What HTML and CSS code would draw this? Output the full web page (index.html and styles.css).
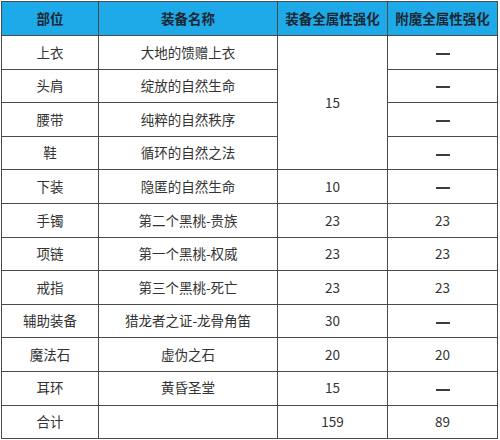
FILE: index.html
```html
<!DOCTYPE html>
<html lang="zh">
<head>
<meta charset="utf-8">
<link rel="stylesheet" href="styles.css">
</head>
<body>
<table class="gear">
  <colgroup>
    <col class="c1"><col class="c2"><col class="c3"><col class="c4">
  </colgroup>
  <thead>
    <tr><th>部位</th><th>装备名称</th><th>装备全属性强化</th><th>附魔全属性强化</th></tr>
  </thead>
  <tbody>
    <tr><td>上衣</td><td>大地的馈赠上衣</td><td rowspan="4">15</td><td><span class="dash"></span></td></tr>
    <tr><td>头肩</td><td>绽放的自然生命</td><td><span class="dash"></span></td></tr>
    <tr><td>腰带</td><td>纯粹的自然秩序</td><td><span class="dash"></span></td></tr>
    <tr><td>鞋</td><td>循环的自然之法</td><td><span class="dash"></span></td></tr>
    <tr><td>下装</td><td>隐匿的自然生命</td><td>10</td><td><span class="dash"></span></td></tr>
    <tr><td>手镯</td><td>第二个黑桃-贵族</td><td>23</td><td>23</td></tr>
    <tr><td>项链</td><td>第一个黑桃-权威</td><td>23</td><td>23</td></tr>
    <tr><td>戒指</td><td>第三个黑桃-死亡</td><td>23</td><td>23</td></tr>
    <tr><td>辅助装备</td><td>猎龙者之证-龙骨角笛</td><td>30</td><td><span class="dash"></span></td></tr>
    <tr><td>魔法石</td><td>虚伪之石</td><td>20</td><td>20</td></tr>
    <tr><td>耳环</td><td>黄昏圣堂</td><td>15</td><td><span class="dash"></span></td></tr>
    <tr><td>合计</td><td></td><td>159</td><td>89</td></tr>
  </tbody>
</table>
</body>
</html>
```

FILE: styles.css
```css
html, body {
  margin: 0;
  padding: 0;
  background: #ffffff;
}
body {
  padding: 1px 0 0 1px;
  font-family: "Noto Sans CJK SC", "Noto Sans", sans-serif;
}
.gear {
  border-collapse: collapse;
  width: 496px;
  table-layout: fixed;
  border: 1px solid #3a3a3a;
}
.c1 { width: 97px; }
.c2 { width: 179px; }
.c3 { width: 110px; }
.c4 { width: 110px; }
.gear th, .gear td {
  border: 1px solid #4a4a4a;
  text-align: center;
  vertical-align: middle;
  padding: 0;
  line-height: 1;
}
.gear th {
  height: 33px;
  background: #1eaae9;
  color: #1d2733;
  font-size: 13.5px;
  font-weight: 700;
}
.gear td {
  height: 32.6px;
  color: #333333;
  font-size: 13.5px;
}
.dash {
  display: inline-block;
  width: 14px;
  height: 2px;
  background: #3c3c3c;
  vertical-align: middle;
}
```
